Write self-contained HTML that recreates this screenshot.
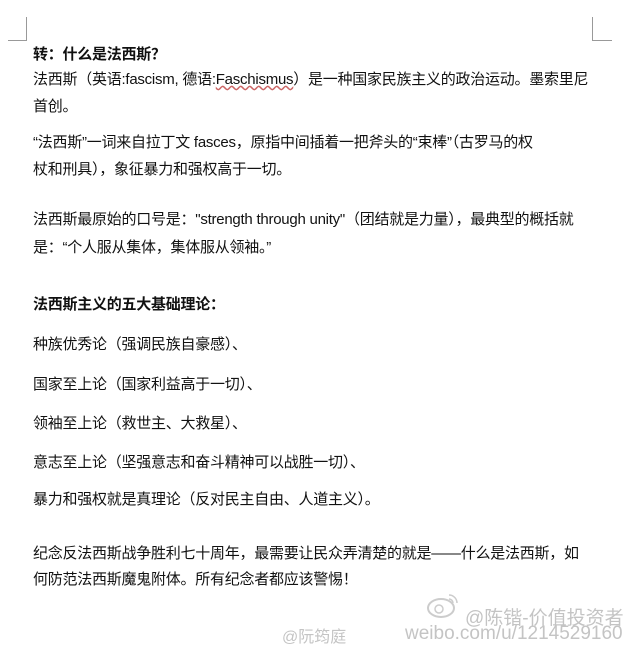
<!DOCTYPE html>
<html><head><meta charset="utf-8"><style>
body{margin:0;width:624px;height:647px;background:#fff;position:relative;overflow:hidden;font-family:"Liberation Sans","Noto Sans CJK SC",sans-serif;color:#111;}
.l{position:absolute;left:33px;font-size:15px;white-space:nowrap;line-height:18px;letter-spacing:-0.25px}
.b{font-weight:bold}
.m{position:absolute;background:#999}
.w{position:absolute;color:#c4c4c4;white-space:nowrap}
</style></head><body>
<div class="m" style="left:26px;top:17px;width:1px;height:24px"></div>
<div class="m" style="left:8px;top:40px;width:19px;height:1px"></div>
<div class="m" style="left:592px;top:17px;width:1px;height:24px"></div>
<div class="m" style="left:592px;top:40px;width:20px;height:1px"></div>
<div class="l b" style="top:46px">转：什么是法西斯？</div>
<div class="l" style="top:71px">法西斯（英语:fascism, 德语:<span style="text-decoration:underline wavy #c66">Faschismus</span>）是一种国家民族主义的政治运动。墨索里尼</div>
<div class="l" style="top:98px">首创。</div>
<div class="l" style="top:134px">“法西斯”一词来自拉丁文 fasces，原指中间插着一把斧头的“束棒”（古罗马的权</div>
<div class="l" style="top:161px">杖和刑具），象征暴力和强权高于一切。</div>
<div class="l" style="top:211px">法西斯最原始的口号是："strength through unity"（团结就是力量），最典型的概括就</div>
<div class="l" style="top:239px">是：“个人服从集体，集体服从领袖。”</div>
<div class="l b" style="top:296px">法西斯主义的五大基础理论：</div>
<div class="l" style="top:336px">种族优秀论（强调民族自豪感）、</div>
<div class="l" style="top:376px">国家至上论（国家利益高于一切）、</div>
<div class="l" style="top:415px">领袖至上论（救世主、大救星）、</div>
<div class="l" style="top:454px">意志至上论（坚强意志和奋斗精神可以战胜一切）、</div>
<div class="l" style="top:491px">暴力和强权就是真理论（反对民主自由、人道主义）。</div>
<div class="l" style="top:545px">纪念反法西斯战争胜利七十周年，最需要让民众弄清楚的就是——什么是法西斯，如</div>
<div class="l" style="top:571px">何防范法西斯魔鬼附体。所有纪念者都应该警惕！</div>
<svg style="position:absolute;left:425px;top:590px" width="40" height="30"><ellipse cx="16" cy="18" rx="13" ry="9" fill="none" stroke="#ccc" stroke-width="2"/><circle cx="14" cy="19" r="4" fill="none" stroke="#ccc" stroke-width="1.5"/><path d="M24 5a8 8 0 0 1 8 8M24 9a4 4 0 0 1 4 4" fill="none" stroke="#ccc" stroke-width="1.5"/></svg>
<div class="w" style="left:465px;top:603px;font-size:19px">@陈锴-价值投资者</div>
<div class="w" style="left:405px;top:623px;font-size:19px">weibo.com/u/1214529160</div>
<div class="w" style="left:282px;top:623px;font-size:16px">@阮筠庭</div>
</body></html>
